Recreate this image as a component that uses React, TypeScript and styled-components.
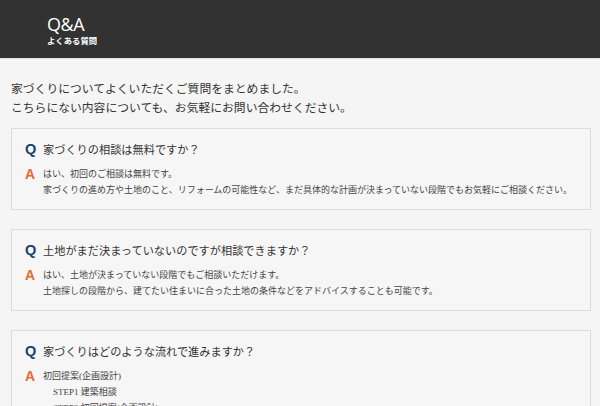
import React from 'react';
import styled, { createGlobalStyle } from 'styled-components';

const GlobalStyle = createGlobalStyle`
  html, body {
    margin: 0;
    padding: 0;
    background: #f5f5f5;
  }
  body {
    font-family: "Noto Sans CJK JP", "Noto Sans", sans-serif;
    color: #333;
  }
`;

interface QA {
  q: string;
  a: string[];
  steps?: string[];
}

const items: QA[] = [
  {
    q: '家づくりの相談は無料ですか？',
    a: [
      'はい、初回のご相談は無料です。',
      '家づくりの進め方や土地のこと、リフォームの可能性など、まだ具体的な計画が決まっていない段階でもお気軽にご相談ください。',
    ],
  },
  {
    q: '土地がまだ決まっていないのですが相談できますか？',
    a: [
      'はい、土地が決まっていない段階でもご相談いただけます。',
      '土地探しの段階から、建てたい住まいに合った土地の条件などをアドバイスすることも可能です。',
    ],
  },
  {
    q: '家づくりはどのような流れで進みますか？',
    a: ['初回提案(企画設計)'],
    steps: ['STEP1 建築相談', 'STEP2 初回提案(企画設計)', 'STEP3 ご契約'],
  },
];

const Header = styled.header`
  background: #323232;
  height: 59px;
  border-bottom: 1px solid #e2e2e2;
  padding: 14px 0 0 47px;
  box-sizing: border-box;
  color: #fff;
`;

const HeaderTitle = styled.h1`
  margin: 0;
  font-family: "Open Sans", "Noto Sans", sans-serif;
  font-weight: 400;
  font-size: 18px;
  line-height: 20px;
  letter-spacing: -0.4px;
`;

const HeaderSub = styled.div`
  font-size: 8.4px;
  font-weight: 700;
  line-height: 10px;
  margin-top: 1px;
`;

const Main = styled.main`
  padding: 19px 9px 0 11px;
`;

const Intro = styled.p`
  margin: 0 0 12px;
  font-size: 11.8px;
  line-height: 19px;
  color: #333;
`;

const CardList = styled.div`
  display: flex;
  flex-direction: column;
  gap: 19px;
`;

const Card = styled.section`
  border: 1px solid #dcdcdc;
  background: #f6f6f6;
  padding: 10px 13px 11px 13px;
`;

const Row = styled.div`
  display: flex;
  align-items: flex-start;
  gap: 5px;
`;

const Mark = styled.span<{ $color: string }>`
  font-family: "Liberation Sans", Arial, sans-serif;
  font-weight: 700;
  font-size: 14.5px;
  line-height: 20px;
  width: 13px;
  flex: none;
  color: ${(p) => p.$color};
`;

const Question = styled.h2`
  margin: 0 0 7px;
  font-size: 11.2px;
  font-weight: 400;
  line-height: 20px;
  color: #333;
`;

const Answer = styled.div`
  font-family: "Liberation Serif", "Noto Sans CJK JP", serif;
  font-size: 9px;
  line-height: 16px;
  color: #444;
`;

const Line = styled.div<{ $indent?: boolean }>`
  padding-left: ${(p) => (p.$indent ? 10 : 0)}px;
  white-space: nowrap;
`;

const AnswerMark = styled(Mark)`
  line-height: 16px;
  font-size: 14px;
`;

const App: React.FC = () => {
  return (
    <>
      <GlobalStyle />
      <Header>
        <HeaderTitle>Q&amp;A</HeaderTitle>
        <HeaderSub>よくある質問</HeaderSub>
      </Header>
      <Main>
        <Intro>
          家づくりについてよくいただくご質問をまとめました。
          <br />
          こちらにない内容についても、お気軽にお問い合わせください。
        </Intro>
        <CardList>
          {items.map((item) => (
            <Card key={item.q}>
              <Row>
                <Mark $color="#1b3f73">Q</Mark>
                <Question>{item.q}</Question>
              </Row>
              <Row>
                <AnswerMark $color="#e8692c">A</AnswerMark>
                <Answer>
                  {item.a.map((line) => (
                    <Line key={line}>{line}</Line>
                  ))}
                  {item.steps?.map((s) => (
                    <Line key={s} $indent>
                      {s}
                    </Line>
                  ))}
                </Answer>
              </Row>
            </Card>
          ))}
        </CardList>
      </Main>
    </>
  );
};

export default App;
